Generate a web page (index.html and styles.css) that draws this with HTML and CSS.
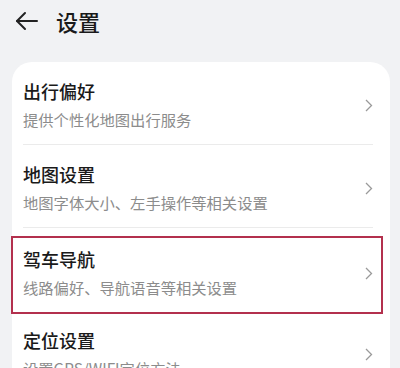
FILE: index.html
```html
<!DOCTYPE html>
<html lang="zh-CN">
<head>
  <meta charset="UTF-8" />
  <meta name="viewport" content="width=device-width, initial-scale=1.0" />
  <title>设置</title>
  <link rel="stylesheet" href="styles.css">
</head>
<body>
  <div class="header">
    <svg class="back" width="24" height="20" viewBox="0 0 24 20" fill="none" stroke="#222" stroke-width="2" stroke-linecap="round" stroke-linejoin="round">
      <path d="M22 10H2"/>
      <path d="M10 2L2 10l8 8"/>
    </svg>
    <div class="page-title">设置</div>
  </div>

  <div class="card">
    <div class="row">
      <div class="text">
        <div class="title">出行偏好</div>
        <div class="desc">提供个性化地图出行服务</div>
      </div>
      <svg class="chevron" width="8" height="13" viewBox="0 0 8 13" fill="none" stroke="#9a9a9a" stroke-width="1.3"><path d="M1 1l5.5 5.5L1 12"/></svg>
    </div>
    <div class="row">
      <div class="text">
        <div class="title">地图设置</div>
        <div class="desc">地图字体大小、左手操作等相关设置</div>
      </div>
      <svg class="chevron" width="8" height="13" viewBox="0 0 8 13" fill="none" stroke="#9a9a9a" stroke-width="1.3"><path d="M1 1l5.5 5.5L1 12"/></svg>
    </div>
    <div class="row marked">
      <div class="text">
        <div class="title">驾车导航</div>
        <div class="desc">线路偏好、导航语音等相关设置</div>
      </div>
      <svg class="chevron" width="8" height="13" viewBox="0 0 8 13" fill="none" stroke="#9a9a9a" stroke-width="1.3"><path d="M1 1l5.5 5.5L1 12"/></svg>
      <div class="highlight-box"></div>
    </div>
    <div class="row">
      <div class="text">
        <div class="title">定位设置</div>
        <div class="desc">设置GPS/WIFI定位方法</div>
      </div>
      <svg class="chevron" width="8" height="13" viewBox="0 0 8 13" fill="none" stroke="#9a9a9a" stroke-width="1.3"><path d="M1 1l5.5 5.5L1 12"/></svg>
    </div>
  </div>
</body>
</html>
```

FILE: styles.css
```css
body {
  margin: 0;
  background: #f1f2f4;
  font-family: "Noto Sans CJK SC", "Noto Sans", sans-serif;
  color: #1a1a1a;
  overflow: hidden;
}

.header {
  display: flex;
  align-items: center;
  height: 42px;
  padding: 0 0 0 15px;
}

.back {
  margin-right: 17px;
}

.page-title {
  font-size: 22px;
  font-weight: 500;
  line-height: 30px;
}

.card {
  margin: 20px 10px 0 12px;
  background: #fff;
  border-radius: 20px;
  padding: 0 17px 0 11px;
}

.row {
  position: relative;
  display: flex;
  align-items: center;
  justify-content: space-between;
  padding: 16px 0 14px;
  border-bottom: 1px solid #ebebeb;
}

.row.marked {
  padding: 18px 0 12px;
  border-bottom-color: transparent;
}

.row:last-child {
  border-bottom: none;
}

.title {
  font-size: 18px;
  font-weight: 500;
  line-height: 26px;
}

.desc {
  font-size: 15.3px;
  line-height: 22px;
  color: #8c8c8c;
  margin-top: 4px;
}

.chevron {
  margin-top: 2px;
}

.highlight-box {
  position: absolute;
  left: -12px;
  right: -10px;
  top: 8px;
  bottom: -4px;
  border: 2px solid #b3304d;
  pointer-events: none;
}
```
